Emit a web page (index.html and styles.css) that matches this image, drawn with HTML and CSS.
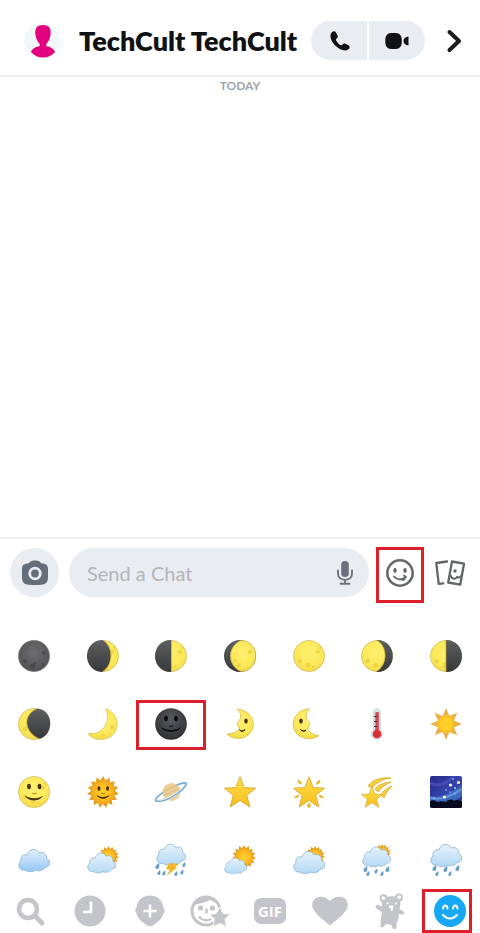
FILE: index.html
```html
<!DOCTYPE html>
<html lang="en">
<head>
<meta charset="utf-8">
<meta name="viewport" content="width=device-width, initial-scale=1">
<title>TechCult TechCult</title>
<link rel="stylesheet" href="styles.css">
</head>
<body>
<svg class="defs" aria-hidden="true">
  <defs>
    <radialGradient id="gDark" cx=".5" cy=".4" r=".6"><stop offset="0" stop-color="#6e6e6f"/><stop offset="1" stop-color="#515254"/></radialGradient>
    <linearGradient id="gShade" x1="0" y1="0" x2="0" y2="1"><stop offset="0" stop-color="#5f6062"/><stop offset="1" stop-color="#37383a"/></linearGradient>
    <radialGradient id="gBlack" cx=".5" cy=".35" r=".65"><stop offset="0" stop-color="#5a5b5e"/><stop offset="1" stop-color="#2e2f32"/></radialGradient>
    <radialGradient id="gMoon" cx=".5" cy=".4" r=".6"><stop offset="0" stop-color="#fff06e"/><stop offset=".7" stop-color="#fce85a"/><stop offset="1" stop-color="#f3da48"/></radialGradient>
    <radialGradient id="gSun" cx=".5" cy=".5" r=".5"><stop offset="0" stop-color="#ffd434"/><stop offset=".6" stop-color="#fcbd22"/><stop offset="1" stop-color="#f0a51c"/></radialGradient>
    <linearGradient id="gStar" x1="0" y1="0" x2="0" y2="1"><stop offset="0" stop-color="#ffdf48"/><stop offset="1" stop-color="#f6be20"/></linearGradient>
    <linearGradient id="gCloud" x1="0" y1="0" x2="0" y2="1"><stop offset="0" stop-color="#e3f1fc"/><stop offset="1" stop-color="#94c6f3"/></linearGradient>
    <linearGradient id="gPale" x1="0" y1="0" x2="0" y2="1"><stop offset="0" stop-color="#e6f3fb"/><stop offset="1" stop-color="#b4d9f4"/></linearGradient>
    <linearGradient id="gSky" x1="0" y1="0" x2="1" y2="1"><stop offset="0" stop-color="#262a86"/><stop offset=".5" stop-color="#3544ae"/><stop offset="1" stop-color="#253587"/></linearGradient>
    <clipPath id="cSky"><rect width="32" height="32" rx="2"/></clipPath>
  </defs>
  <symbol id="yellowDisc" viewBox="0 0 32 32">
    <circle cx="16" cy="16" r="15.600" fill="url(#gMoon)" stroke="#d2c06a" stroke-width=".8"/>
    <g fill="#dfbd2b" opacity=".45"><circle cx="7" cy="21" r="2.300"/><circle cx="15" cy="25" r="2.500"/><circle cx="25" cy="12" r="2"/><circle cx="27" cy="8" r="1.300"/><circle cx="20" cy="26.500" r="1.300"/></g>
  </symbol>
  <symbol id="cloud" viewBox="0 0 32 32">
    <path d="M7 26C1 27-1.200 20 3 17 2 12 6 10 9 11 11 4 19 4 21 9c5-2 8 2 7.500 5.500C33 16 33 23 27 23.500 25 27 20 27.500 18 26c-3 2-8 2-11 0Z" stroke="#94b8d6" stroke-width=".9"/>
  </symbol>
  <symbol id="spiky" viewBox="0 0 32 32">
    <path id="tri" d="M16 0 29.860 24H2.140Z"/><use href="#tri" transform="rotate(24 16 16)"/><use href="#tri" transform="rotate(48 16 16)"/><use href="#tri" transform="rotate(72 16 16)"/><use href="#tri" transform="rotate(96 16 16)"/>
  </symbol>
  <symbol id="sunDisc" viewBox="0 0 32 32">
    <use href="#spiky" fill="#e39f22"/><circle cx="16" cy="16" r="12" fill="url(#gSun)"/>
  </symbol>
  <symbol id="star" viewBox="0 0 32 32">
    <path d="m16 .8 4.200 10.700 11.300.7-8.700 7.200L25.800 31 16 24.500 6.200 31l3-11.600L.5 12.200l11.300-.7Z" fill="url(#gStar)" stroke="#d8a82c" stroke-width=".9" stroke-linejoin="round"/>
  </symbol>
  <symbol id="drop" viewBox="0 0 5 6"><path d="M4 0C4.500 2 4.800 6 2.200 6-.8 6 0 2.500 4 0Z" fill="#669fca"/></symbol>
</svg>

<header class="header">
  <a class="avatar" href="#profile" aria-label="Profile">
    <svg viewBox="0 0 36 36" width="36" height="36" aria-hidden="true"><path fill="#e2007f" d="M19 2c6.500 0 8.500 4 7.500 10-.6 4-2.200 7-4.200 9v2c4 .9 7.700 2.700 8.700 6-3.500 4-7.500 5.500-12 5.500S10.500 33 7 29c1-3.300 4.700-5.100 8.700-6v-2C13.700 19 12.100 16 11.500 12 10.500 6 12.500 2 19 2Z"/></svg>
  </a>
  <h1 class="title">TechCult TechCult</h1>
  <div class="calls">
    <button class="call" aria-label="Voice call"><svg viewBox="0 0 22 22" width="22" height="22" aria-hidden="true"><path fill="#101214" d="M3.300 3C4.700 1 7 .8 8 2.400l1.500 3.200c.6 1.200.3 2.200-.8 3-1 .7-.9 1.300-.4 2.200 1.100 1.900 2.300 3.200 4 4.200.9.500 1.500.5 2.200-.4.800-1.100 1.800-1.400 3-.8l3 1.400c1.700 1 1.500 3.300-.4 4.400-3.300 2-8.500.2-12.400-3.600C3.600 12 1.100 6.300 3.300 3Z"/></svg></button>
    <button class="call" aria-label="Video call"><svg viewBox="0 0 24 18" width="24" height="18" aria-hidden="true"><path fill="#101214" d="M8.500 1c6.300 0 8.300 1.700 8.300 8s-2 8-8.300 8S.3 15.300.3 9s2-8 8.200-8Zm15 3.500v9c-3.200-.4-5-2-5-4.500s1.800-4.100 5-4.500Z"/></svg></button>
  </div>
  <button class="next" aria-label="Open details"><svg viewBox="0 0 16 24" width="16" height="24" aria-hidden="true"><path d="m3.500 3 9.500 9-9.500 9" fill="none" stroke="#191b1e" stroke-width="4" stroke-linecap="round" stroke-linejoin="round"/></svg></button>
</header>

<main class="chat"><p class="day">TODAY</p></main>

<form class="composer">
  <button class="camera" type="button" aria-label="Camera"><svg viewBox="0 0 28 26" width="28" height="26" aria-hidden="true"><path fill="#656d78" d="M9.500 1.500c2-1.300 7-1.300 9 0l1.800 1.700c4.700.2 6.700 1.800 6.700 6v8c0 5-2 7.200-7 7.500-4 .3-8 .3-12 0-5-.3-7-2.500-7-7.500v-8c0-4.200 2-5.800 6.700-6Z"/><circle cx="14" cy="13.500" r="5.300" fill="none" stroke="#e9ecf1" stroke-width="2.800"/></svg></button>
  <div class="field">
    <input class="message" type="text" placeholder="Send a Chat" aria-label="Send a Chat">
    <button class="mic" type="button" aria-label="Voice note"><svg viewBox="0 0 16 24" width="16" height="24" aria-hidden="true"><rect x="4.200" y="0" width="7.600" height="16" rx="3.800" fill="#6b717a"/><path d="M1 9.500v3c0 8.500 14 8.500 14 0v-3M8 19v3.500M3.500 22.800h9" fill="none" stroke="#6b717a" stroke-width="1.900" stroke-linecap="round"/></svg></button>
  </div>
  <button class="smile marked" type="button" aria-label="Emoji and stickers"><svg viewBox="0 0 28 28" width="28" height="28" aria-hidden="true"><g fill="none" stroke="#63666b" stroke-width="2.500" stroke-linecap="round"><circle cx="14" cy="14" r="12.700"/><path stroke-width="1.800" d="M8 17.500c2.500 3.500 7.500 3.800 11 1M18 16.500l2 1.500M15.500 20.500c1.800 1 3.500 0 3.500-2"/></g><g fill="#63666b"><ellipse cx="9" cy="11.500" rx="1.700" ry="2.400"/><ellipse cx="19" cy="11.500" rx="1.700" ry="2.400"/></g></svg></button>
  <button class="cards" type="button" aria-label="Memories"><svg viewBox="0 0 30 26" width="30" height="26" aria-hidden="true"><g fill="none" stroke="#63666b" stroke-width="2.300" stroke-linecap="round" stroke-linejoin="round"><path d="M12 1.500 1.300 3l2.400 20.800 4.500-.5M17 1.500l12 2.200-3.800 21-12-2.200Z"/><path stroke-width="2" d="M15.500 15.500c1.800 4 5 4.300 6.700 1.200 1.300 1.300 3 1 4.300-1.200"/></g><circle cx="20" cy="11" r="1.700" fill="#63666b"/></svg></button>
</form>

<section class="emojis" aria-label="Emoji">
  <button class="emoji" aria-label="New moon"><svg viewBox="0 0 32 32"><circle cx="16" cy="16" r="15.700" fill="url(#gDark)" stroke="#858688" stroke-width=".6"/><g fill="#37383a" opacity=".45"><circle cx="7" cy="21" r="2"/><circle cx="14.500" cy="26" r="2.500"/><circle cx="26" cy="13" r="2"/><circle cx="17" cy="23.500" r="1.300"/><circle cx="25" cy="24" r="1.200"/></g></svg></button>
  <button class="emoji" aria-label="Waxing crescent moon"><svg viewBox="0 0 32 32"><use href="#yellowDisc"/><path d="M15 0C26 5 27 25 15 32-5 31-5 1 15 0Z" fill="url(#gShade)"/><path d="M17 1c10 6 9 24-1 30" fill="none" stroke="#b99e32" opacity=".6"/></svg></button>
  <button class="emoji" aria-label="First quarter moon"><svg viewBox="0 0 32 32"><use href="#yellowDisc"/><path d="M16 0v32C-5.300 32-5.300 0 16 0Z" fill="url(#gShade)"/><path d="M16.500 0v32" stroke="#b99e32" opacity=".6"/></svg></button>
  <button class="emoji" aria-label="Waxing gibbous moon"><svg viewBox="0 0 32 32"><circle cx="16" cy="16" r="16" fill="url(#gShade)"/><path d="M17 .6c19.500 0 19.500 30.800 0 30.800C3 26 3 6 17 .6Z" fill="url(#gMoon)" stroke="#cdb954" stroke-width=".8"/><g fill="#dfbd2b" opacity=".5"><circle cx="26" cy="12" r="2"/><circle cx="15" cy="25" r="2"/><circle cx="11" cy="20" r="1.500"/></g></svg></button>
  <button class="emoji" aria-label="Full moon"><svg viewBox="0 0 32 32"><use href="#yellowDisc"/></svg></button>
  <button class="emoji" aria-label="Waning gibbous moon"><svg viewBox="0 0 32 32"><use href="#yellowDisc"/><path d="M15 0C27 5 28 25 15 32 37.500 33 37.500-1 15 0Z" fill="url(#gShade)"/><path d="M17 1c10 6 9 24-1 30" fill="none" stroke="#b99e32" opacity=".6"/></svg></button>
  <button class="emoji" aria-label="Last quarter moon"><svg viewBox="0 0 32 32"><use href="#yellowDisc"/><path d="M16 0v32C37.300 32 37.300 0 16 0Z" fill="url(#gShade)"/><path d="M16 0v32" stroke="#b99e32" opacity=".6"/></svg></button>

  <button class="emoji" aria-label="Waning crescent moon"><svg viewBox="0 0 32 32"><use href="#yellowDisc"/><path d="M20 .5C5 5 5 24 22 30.800 36 26 36 3 20 .5Z" fill="url(#gShade)"/><path d="M19 1C5 6 5 24 21 31" fill="none" stroke="#b99e32" opacity=".6"/></svg></button>
  <button class="emoji" aria-label="Crescent moon"><svg viewBox="0 0 32 32"><path d="M18.500.8C33 5 34 24 22 29.500 14 33.500 4 31 1.200 25.500 14 28 25 15 18.500.8Z" fill="url(#gMoon)" stroke="#d9c65e" stroke-width=".8"/><g fill="#dfbd2b" opacity=".45"><circle cx="25" cy="19" r="2"/><circle cx="16" cy="27" r="1.700"/></g></svg></button>
  <button class="emoji marked marked-wide" aria-label="New moon face"><svg viewBox="0 0 32 32"><circle cx="16" cy="16" r="15.800" fill="url(#gBlack)"/><g fill="#0b0c0e"><ellipse cx="11" cy="10.500" rx="1.900" ry="2.800"/><ellipse cx="21" cy="10.500" rx="1.900" ry="2.800"/><path d="M6 19c5 4 15 4 20 0-3 6.500-17 6.500-20 0Z"/></g><path d="M14 17.500c1 1.300 3 1.300 4 0" fill="none" stroke="#111" stroke-width="1.200"/></svg></button>
  <button class="emoji" aria-label="First quarter moon face"><svg viewBox="0 0 32 32"><path d="M13 1c14 1 20 14 14 23-5 8-18 8.500-24 2 6-.5 10-2 13-6-2-.3-2.500-1.500-1.500-3-2-.8-2-2 0-3.500C18 10 17 4 13 1Z" fill="url(#gMoon)" stroke="#d3bc4a" stroke-width=".8"/><ellipse cx="22" cy="13" rx="1.800" ry="2.600" fill="#40311c"/><path d="M15.500 22c1.500 1.200 4 1 5.500-.5-.5 2-4 2.500-5.500.5Z" fill="#40311c" stroke="#40311c"/></svg></button>
  <button class="emoji" aria-label="Last quarter moon face"><svg viewBox="0 0 32 32"><path d="M16.500.8C2 2-3 15 2.500 24c5 8 18 8.500 23.500 3.500-6 0-10-3.500-12-7.500 2-.3 2.500-1.500 1.500-3 2-.8 2-2 0-3.500-3.500-3.500-3-9 1-12.700Z" fill="url(#gMoon)" stroke="#d3bc4a" stroke-width=".8"/><ellipse cx="8" cy="13" rx="1.800" ry="2.600" fill="#40311c"/><path d="M7.500 21.500c1.500 1.500 4 1.700 5.500.5-1 2-4 1.500-5.500-.5Z" fill="#40311c" stroke="#40311c"/></svg></button>
  <button class="emoji" aria-label="Thermometer"><svg viewBox="0 0 32 32"><path d="M12.500 4c0-4.500 7-4.500 7 0v17.500a5.600 5.600 0 1 1-7 0Z" fill="#dbe3ea" stroke="#c4ced8" stroke-width=".7"/><path d="M14.300 5c0-1.300 3.600-1.300 3.600 0v17h-3.600Z" fill="#d84a50"/><circle cx="16" cy="26" r="4.300" fill="#d92e38"/><path d="M13 8.500h3M13 13.500h3M13 18.500h3" stroke="#372b31" stroke-width="1.200"/></svg></button>
  <button class="emoji" aria-label="Sun"><svg viewBox="0 0 32 32"><path d="m16 0 11.300 27.300L0 16 27.300 4.700 16 32 4.700 4.700 32 16 4.700 27.300Z" fill="#eab04a"/><circle cx="16" cy="16" r="8.700" fill="#fcbf22"/><circle cx="16" cy="16" r="6.500" fill="#ffd029"/></svg></button>

  <button class="emoji" aria-label="Full moon face"><svg viewBox="0 0 32 32"><use href="#yellowDisc"/><g fill="#4a3415"><ellipse cx="11" cy="10.500" rx="1.900" ry="2.800"/><ellipse cx="21.500" cy="10.500" rx="1.900" ry="2.800"/><path d="M7 19.500c5 3.500 14 3.500 18 0-3 6.500-15 6.500-18 0Z"/></g><path d="M14.500 17c1 1.200 3 1.200 4 0" fill="none" stroke="#c69b24" stroke-width="1.300"/></svg></button>
  <button class="emoji" aria-label="Sun with face"><svg viewBox="0 0 32 32"><use href="#sunDisc"/><g fill="#4a2d0c"><ellipse cx="12" cy="12.500" rx="1.500" ry="2.300"/><ellipse cx="20.500" cy="12.500" rx="1.500" ry="2.300"/><path d="M9.500 19c4 2.500 9 2.500 13 0-2.500 5-10.500 5-13 0Z"/></g><path d="M14.500 17c1 1 2.500 1 3.500 0" fill="none" stroke="#bd7b10" stroke-width="1.200"/></svg></button>
  <button class="emoji" aria-label="Ringed planet"><svg viewBox="0 0 32 32"><ellipse cx="16" cy="16" rx="17.500" ry="3.800" transform="rotate(-29 16 16)" fill="none" stroke="#78add3" stroke-width="1.700"/><circle cx="16.500" cy="16" r="9" fill="#ebcf95"/><path d="M8 16 23 8.800M8 20l17-8M11 23l14-7" stroke="#d8b67c" opacity=".6"/><path d="M1.500 24c3 2 10-.3 16.500-4 5.500-3.200 11-7.500 12.500-11" fill="none" stroke="#e8edf0" stroke-width="2.600"/><path d="M.8 24.500c3.500 2 10.500-.3 17-4C23.500 17 29.500 12 31 8.500" fill="none" stroke="#6ea6d0" stroke-width="1.300"/></svg></button>
  <button class="emoji" aria-label="Star"><svg viewBox="0 0 32 32"><use href="#star"/></svg></button>
  <button class="emoji" aria-label="Glowing star"><svg viewBox="0 0 32 32"><use href="#star"/><g fill="#ecb92c"><path d="M4.500 4c2.500 0 4.500 2 4.500 4.500C6 8.500 4.500 6.500 4.500 4ZM27.500 4c-2.500 0-4.500 2-4.500 4.500 3 0 4.500-2 4.500-4.500ZM1 22c1-2.300 3-3.300 5.500-2.800-1 2.500-3 3.300-5.500 2.800ZM31 22c-1-2.300-3-3.300-5.500-2.800 1 2.500 3 3.300 5.500 2.800ZM16 26.500c2.500 2.500 2.500 4 0 5.500-2.500-1.500-2.500-3 0-5.500Z"/></g></svg></button>
  <button class="emoji" aria-label="Shooting star"><svg viewBox="0 0 32 32"><g fill="#f3cf40" stroke="#d6a623" stroke-width=".7"><path d="M7 10C11 4 19 1 30 2 22 3 15 7 11 12ZM14 13c3-4 8-6.500 16-7-5 2-10 6-13 10ZM20 19c2-4 5-7 11-9-3 3-6 7-8 12Z"/></g><svg x="0" y="10" width="22" height="22" viewBox="0 0 32 32"><use href="#star"/></svg></svg></button>
  <button class="emoji" aria-label="Milky way"><svg viewBox="0 0 32 32"><g clip-path="url(#cSky)"><rect width="32" height="32" fill="url(#gSky)"/><path d="M0 20c12 3 21-4 32-11v11C22 28 10 28 0 26Z" fill="#3d68bf"/><path d="M0 22c13 3 22-3 32-9" fill="none" stroke="#6694d9" stroke-width="2"/><path d="M0 7c9 4 16 1 24-7" fill="none" stroke="#474bb4" stroke-width="3"/><path d="M0 25c3-1 5-1 7 1 4-1 6-1 9 0 3-3 6-3 8-1 3-2 5-1 8 1v6H0Z" fill="#070a1c"/><g fill="#fff4ad"><circle cx="20.500" cy="9" r="1.600"/><circle cx="28.500" cy="6.500" r="1.600"/><circle cx="14.500" cy="21" r="1.600"/></g><g fill="#c4d4f5"><circle cx="23" cy="3" r=".8"/><circle cx="25" cy="12" r=".9"/><circle cx="16" cy="14" r=".8"/><circle cx="25" cy="18" r=".7"/><circle cx="20" cy="16" r=".7"/><circle cx="4" cy="22" r=".8"/></g></g></svg></button>

  <button class="emoji" aria-label="Cloud"><svg viewBox="0 0 32 32"><use href="#cloud" fill="url(#gCloud)"/></svg></button>
  <button class="emoji" aria-label="Sun behind cloud"><svg viewBox="0 0 32 32"><use href="#sunDisc" x="11" y="2" width="21" height="21"/><use href="#cloud" x="0" y="4" width="29" height="29" fill="url(#gPale)"/></svg></button>
  <button class="emoji" aria-label="Thunderstorm"><svg viewBox="0 0 32 32"><use href="#cloud" x="1" y="-5" width="30" height="30" fill="url(#gPale)"/><path d="m14 19 10 1-4 3 2 1-11 8 4-6-4-1Z" fill="#f0b730"/><use href="#drop" x="0" y="19" width="5" height="6"/><use href="#drop" x="2" y="26" width="4" height="5"/><use href="#drop" x="7" y="26" width="4" height="6"/><use href="#drop" x="19" y="27" width="4" height="5"/><use href="#drop" x="25" y="25" width="4" height="6"/><use href="#drop" x="27" y="18" width="4" height="5"/></svg></button>
  <button class="emoji" aria-label="Sun behind small cloud"><svg viewBox="0 0 32 32"><use href="#sunDisc" x="8" y="1" width="24" height="24"/><use href="#cloud" x="0" y="10" width="23" height="23" fill="url(#gPale)"/></svg></button>
  <button class="emoji" aria-label="Sun behind large cloud"><svg viewBox="0 0 32 32"><use href="#sunDisc" x="12" y="2" width="20" height="20"/><use href="#cloud" x="0" y="2" width="32" height="32" fill="url(#gPale)"/></svg></button>
  <button class="emoji" aria-label="Sun behind rain cloud"><svg viewBox="0 0 32 32"><use href="#sunDisc" x="12" y="0" width="18" height="18"/><use href="#cloud" x="1" y="-2" width="29" height="29" fill="url(#gPale)"/><use href="#drop" x="2" y="22" width="5" height="6"/><use href="#drop" x="5" y="27" width="4" height="5"/><use href="#drop" x="13" y="24" width="4" height="6"/><use href="#drop" x="19" y="27" width="4" height="5"/><use href="#drop" x="24" y="22" width="5" height="6"/></svg></button>
  <button class="emoji" aria-label="Rain cloud"><svg viewBox="0 0 32 32"><use href="#cloud" x="0" y="-5" width="32" height="32" fill="url(#gPale)"/><use href="#drop" x="2" y="21" width="5" height="6"/><use href="#drop" x="5" y="27" width="4" height="5"/><use href="#drop" x="13" y="22" width="5" height="6"/><use href="#drop" x="18" y="27" width="4" height="5"/><use href="#drop" x="25" y="21" width="5" height="6"/></svg></button>
</section>

<nav class="tabs" aria-label="Stickers">
  <button class="tab" aria-label="Search"><svg viewBox="0 0 36 36"><circle cx="16" cy="16" r="9" fill="none" stroke="#c4c5ca" stroke-width="4.500"/><path d="m23 23 7 7" stroke="#c4c5ca" stroke-width="4.800" stroke-linecap="round"/></svg></button>
  <button class="tab" aria-label="Recent"><svg viewBox="0 0 36 36"><circle cx="18" cy="18" r="15.500" fill="#c4c5ca"/><path d="M19 8.500v10.500h-8" fill="none" stroke="#fff" stroke-width="2.600"/></svg></button>
  <button class="tab" aria-label="Add Bitmoji"><svg viewBox="0 0 36 36"><path d="M18 2.500c8 0 13 5 13.300 12 2 1 1.700 5 0 6C30 27 24 30 21 32.500q-3 1.500-6 0C12 30 6 27 4.700 20.500c-1.700-1-2-5 0-6C5 7.500 10 2.500 18 2.500Z" fill="#c4c5ca"/><path d="M18 11.500v13M11.500 18h13" stroke="#fff" stroke-width="2.600"/></svg></button>
  <button class="tab" aria-label="Favourite stickers"><svg viewBox="0 0 40 36" class="wide"><circle cx="16" cy="18" r="14" fill="none" stroke="#c4c5ca" stroke-width="3"/><path d="M3 12C7 0 24 0 29 11c-4-1-6-3-9-4-5 3-12 4-17 5Z" fill="#c4c5ca"/><circle cx="10.500" cy="15" r="2.600" fill="#c4c5ca"/><circle cx="22.500" cy="15" r="2.600" fill="#c4c5ca"/><path d="M16.500 15.500v5M9 23.500c3.500 4.500 8.500 4.500 12 2.500" fill="none" stroke="#c4c5ca" stroke-width="2.400"/><path d="m30 14 3 6.500 7.500.5-5.500 5 1.500 8-6.500-3.500-7 3.500 1.500-8L19 21.500l7-1Z" fill="#c4c5ca" stroke="#fff"/></svg></button>
  <button class="tab" aria-label="GIF"><span class="gif">GIF</span></button>
  <button class="tab" aria-label="Favourites"><svg viewBox="0 0 36 36"><path d="M18 32.500C11 26.500.2 19 .2 12 .2 2.500 12 1 18 8c6-7 17.800-5.500 17.800 4 0 7-10.800 14.500-17.800 20.500Z" fill="#c4c5ca"/></svg></button>
  <button class="tab" aria-label="Animal stickers"><svg viewBox="0 0 36 36"><g fill="#c4c5ca"><path d="M11 5.500C16 2.500 22 2.500 27 5c2 4 1.500 7.500.5 11l3.500 2c2 1.500 1 4-1 3.500l-3-.5c-.5 4-1 7-2.500 10v3.500c-.5 2-3.500 2-4 .5L19.500 32l-5.500-1-2.500 3c-1.500 1-3.500 0-3-2 .5-5 .5-8.500 1.500-13l-5.500-3.500c-2-1.500-.5-4.500 2-3.500l4 1.500C9.500 10.500 9.500 8 11 5.500Z"/><circle cx="11.500" cy="5.300" r="4"/><circle cx="27" cy="4.500" r="4"/></g><g fill="#fff"><circle cx="11.300" cy="5" r="1.800"/><circle cx="27.300" cy="4.300" r="1.800"/><circle cx="15.500" cy="10.300" r="1"/><circle cx="24" cy="10.500" r="1"/><path d="M17 12.500h4.500l-1 5.500h-1.500l-.3-3H17Z"/></g></svg></button>
  <button class="tab marked" aria-label="Emoji" aria-current="true"><svg viewBox="0 0 36 36"><circle cx="18" cy="18" r="16" fill="#17a8f5"/><g fill="none" stroke="#fff" stroke-width="2" stroke-linecap="round"><path d="M11 15.500c.5-4 4-4 4.500 0M21 15.500c.5-4 4-4 4.500 0M11 22c4 4.500 10 4.500 14 0"/></g></svg></button>
</nav>
</body>
</html>
```
FILE: styles.css
```css
* { box-sizing: border-box; }

body {
  margin: 0;
  min-height: 100vh;
  display: flex;
  flex-direction: column;
  background: #fff;
  color: #101214;
  font-family: Lato, "Open Sans", sans-serif;
}

button {
  display: flex;
  align-items: center;
  justify-content: center;
  padding: 0;
  border: 0;
  background: none;
  font: inherit;
  color: inherit;
}

svg { display: block; overflow: visible; }

.defs { position: absolute; width: 0; height: 0; }

.header {
  display: flex;
  align-items: center;
  height: 77px;
  padding: 6px 18px 0 24px;
  border-bottom: 2px solid #eeeff0;
}

.avatar {
  width: 36px;
  height: 36px;
  border-radius: 50%;
  background: #f4f7fa;
}

.title {
  flex: 1;
  margin: 0 0 0 19px;
  font-size: 27px;
  line-height: 32px;
  font-weight: 800;
  white-space: nowrap;
}

.calls {
  display: flex;
  gap: 2px;
  height: 39px;
  border-radius: 20px;
  overflow: hidden;
}

.call { width: 56px; background: #e9ecf1; }

.next { margin-left: 21px; }

.chat { flex: 1; }

.day {
  margin: 0;
  text-align: center;
  font-size: 12px;
  line-height: 18px;
  font-weight: 700;
  color: #a0a3a8;
}

.composer {
  display: flex;
  align-items: center;
  padding: 9px 15px 0 10px;
  border-top: 2px solid #f0f1f2;
}

.camera {
  width: 49px;
  height: 49px;
  border-radius: 50%;
  background: #e9ecf1;
}

.field {
  flex: 1;
  display: flex;
  align-items: center;
  min-width: 0;
  height: 49px;
  margin: 0 7px 0 10px;
  padding: 0 16px 0 18px;
  border-radius: 25px;
  background: #e9ecf1;
}

.message {
  flex: 1;
  min-width: 0;
  padding: 0;
  border: 0;
  outline: 0;
  background: none;
  font: inherit;
  font-size: 20px;
  color: #101214;
}

.message::placeholder { color: #b2b5ba; opacity: 1; }

.smile { width: 48px; height: 49px; }

.cards { margin-left: 11px; }

.marked { position: relative; }

.marked::after {
  content: "";
  position: absolute;
  inset: 0 8px 0 2px;
  border: 3px solid #dc1f28;
}

.smile::after { inset: -1px 0 -6px; }

.marked-wide::after { inset: -8px 0 -10px -1px; }

.emojis {
  display: grid;
  grid-template-columns: repeat(7, 1fr);
  row-gap: 36px;
  margin-top: 43px;
}

.emoji { height: 32px; }

.emoji > svg { width: 32px; height: 32px; }

.tabs {
  display: grid;
  grid-template-columns: repeat(8, 1fr);
  margin-top: 13px;
}

.tab { height: 44px; }

.tab > svg { width: 36px; height: 36px; }

.tab > .wide { width: 40px; }

.gif {
  width: 32px;
  border-radius: 7px;
  background: #c4c5ca;
  color: #fff;
  font-family: "Open Sans", sans-serif;
  font-size: 15px;
  line-height: 26px;
  font-weight: 700;
}
```
